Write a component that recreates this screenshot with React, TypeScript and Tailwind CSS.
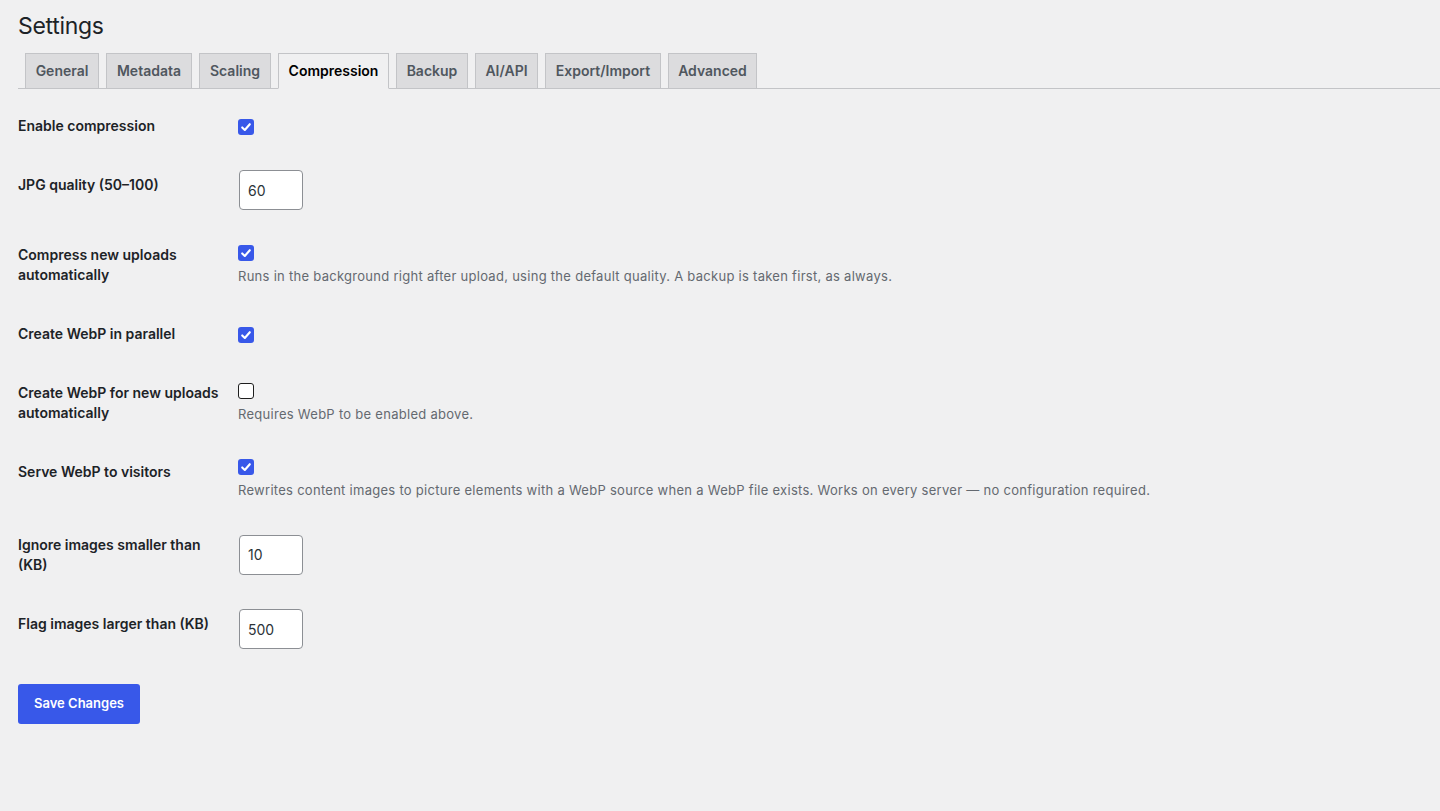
import React from "react";

const tabs = [
  { name: "General", w: "w-[74px]" },
  { name: "Metadata", w: "w-[86px]" },
  { name: "Scaling", w: "w-[72px]" },
  { name: "Compression", w: "w-[111px]", active: true },
  { name: "Backup", w: "w-[72px]" },
  { name: "AI/API", w: "w-[63px]" },
  { name: "Export/Import", w: "w-[116px]" },
  { name: "Advanced", w: "w-[89px]" },
];

function Checkbox({ checked }: { checked: boolean }) {
  return (
    <div className="flex h-[18px] items-center">
      {checked ? (
        <span className="flex h-[16px] w-[16px] items-center justify-center rounded-[3px] bg-[#3858e9]">
          <svg width="12" height="12" viewBox="0 0 12 12" fill="none">
            <path d="M2.2 6.4 L4.8 9 L9.8 3.2" stroke="#ffffff" strokeWidth="2.1" strokeLinecap="round" strokeLinejoin="round" />
          </svg>
        </span>
      ) : (
        <span className="block h-[16px] w-[16px] rounded-[3px] border border-[#1e1e1e] bg-white" />
      )}
    </div>
  );
}

function Desc({ children }: { children: React.ReactNode }) {
  return <p className="mt-[4px] text-[13px] leading-[21px] tracking-[0.28px] text-[#646970]">{children}</p>;
}

function NumInput({ value }: { value: string }) {
  return (
    <div className="ml-[1px] flex h-[40px] w-[64px] items-center rounded-[4px] border border-[#8c8f94] bg-white px-[8px] text-[14px] text-[#2c3338]">
      {value}
    </div>
  );
}

function Row({
  label,
  children,
  input,
}: {
  label: React.ReactNode;
  children: React.ReactNode;
  input?: boolean;
}) {
  return (
    <div className="flex">
      <div className="w-[220px] shrink-0 pb-[20px] pr-[20px] pt-[19px] text-[14px] font-semibold leading-[20px] text-[#1d2327] whitespace-nowrap">
        {label}
      </div>
      <div
        className={
          input
            ? "flex flex-1 flex-col justify-center pb-[16px] pt-[14px]"
            : "flex flex-1 flex-col justify-center py-[15px]"
        }
      >
        {children}
      </div>
    </div>
  );
}

export default function App() {
  return (
    <div
      className="min-h-[811px] w-full bg-[#f0f0f1] text-[#1d2327]"
      style={{ fontFamily: "Inter, 'Noto Sans', 'Liberation Sans', sans-serif" }}
    >
      <div className="pl-[18px]">
        <h1 className="pt-[11px] text-[23px] font-normal leading-[30px] tracking-[-0.3px] text-[#1d2327]">Settings</h1>
        <nav className="mt-[12px] flex gap-[7px] border-b border-[#c3c4c7] pl-[7px]">
          {tabs.map((t) => (
            <div
              key={t.name}
              className={
                t.active
                  ? `${t.w} -mb-px flex h-[36px] items-center justify-center border border-[#c3c4c7] border-b-[#f0f0f1] bg-[#f0f0f1] pb-[1px] text-[14px] font-semibold text-black`
                  : `${t.w} -mb-px flex h-[36px] items-center justify-center border border-[#c3c4c7] bg-[#dcdcde] pb-[1px] text-[14px] font-semibold text-[#50575e]`
              }
            >
              {t.name}
            </div>
          ))}
        </nav>

        <div className="mt-[8px]">
          <Row label="Enable compression">
            <Checkbox checked />
          </Row>
          <Row label="JPG quality (50–100)" input>
            <NumInput value="60" />
          </Row>
          <Row
            label={
              <>
                Compress new uploads
                <br />
                automatically
              </>
            }
          >
            <Checkbox checked />
            <Desc>Runs in the background right after upload, using the default quality. A backup is taken first, as always.</Desc>
          </Row>
          <Row label="Create WebP in parallel">
            <Checkbox checked />
          </Row>
          <Row
            label={
              <>
                Create WebP for new uploads
                <br />
                automatically
              </>
            }
          >
            <Checkbox checked={false} />
            <Desc>Requires WebP to be enabled above.</Desc>
          </Row>
          <Row label="Serve WebP to visitors">
            <Checkbox checked />
            <Desc>
              Rewrites content images to picture elements with a WebP source when a WebP file exists. Works on every server — no configuration required.
            </Desc>
          </Row>
          <Row
            label={
              <>
                Ignore images smaller than
                <br />
                (KB)
              </>
            }
            input
          >
            <NumInput value="10" />
          </Row>
          <Row label="Flag images larger than (KB)" input>
            <NumInput value="500" />
          </Row>
        </div>

        <button className="mt-[19px] flex h-[40px] w-[122px] items-center justify-center rounded-[3px] bg-[#3858e9] text-[13px] font-semibold text-white">
          Save Changes
        </button>
      </div>
    </div>
  );
}
